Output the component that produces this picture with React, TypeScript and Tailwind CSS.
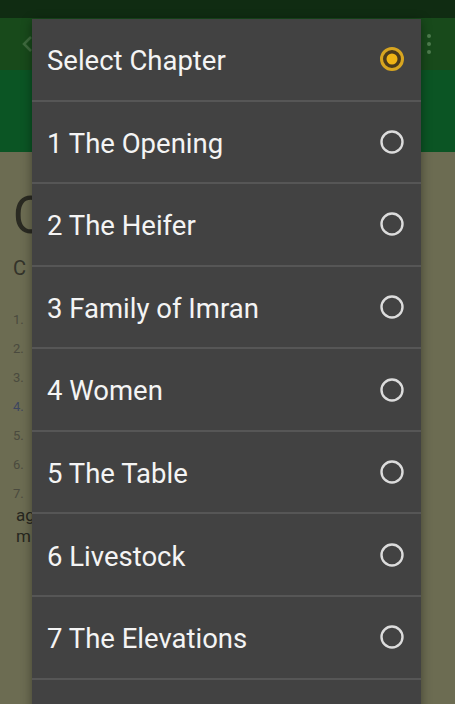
const chapters = [
  "Select Chapter",
  "1 The Opening",
  "2 The Heifer",
  "3 Family of Imran",
  "4 Women",
  "5 The Table",
  "6 Livestock",
  "7 The Elevations"
];

function Radio({ checked }: { checked: boolean }) {
  if (checked) {
    return (
      <svg width="28" height="28" viewBox="0 0 28 28">
        <circle cx="14" cy="14" r="10.5" fill="#4a3a1c" stroke="#d7a520" strokeWidth="3" />
        <circle cx="14" cy="14" r="5.5" fill="#f0b414" />
      </svg>
    );
  }
  return (
    <svg width="28" height="28" viewBox="0 0 28 28">
      <circle cx="14" cy="14" r="10.5" fill="none" stroke="#dcdcdc" strokeWidth="2.4" />
    </svg>
  );
}

export default function App() {
  return (
    <div className="relative h-[704px] w-[455px] overflow-hidden bg-[#6c6c52] font-['Roboto',sans-serif]">
      <div className="h-[18px] bg-[#102c12]" />
      <div className="flex h-[52px] items-center justify-between bg-[#184a1b] pl-[20px] pr-[24px]">
        <svg width="14" height="18" viewBox="0 0 14 18">
          <path d="M11 2 L4 9 L11 16" fill="none" stroke="#3e6a3e" strokeWidth="2.5" />
        </svg>
        <div className="flex flex-col gap-[4px]">
          <span className="h-[4px] w-[4px] rounded-full bg-[#4e7d4e]" />
          <span className="h-[4px] w-[4px] rounded-full bg-[#4e7d4e]" />
          <span className="h-[4px] w-[4px] rounded-full bg-[#4e7d4e]" />
        </div>
      </div>
      <div className="h-[82px] bg-[#0b5524]" />
      <div className="px-[13px] pt-[38px] text-[#2a2a22]">
        <div className="text-[52px] leading-[52px]">Q</div>
        <div className="mt-[14px] text-[20px] leading-[24px] text-[#33332a]">C</div>
        <div className="mt-[31px] flex flex-col gap-[12px] text-[13px] leading-[17px] text-[#4a4a3e]">
          <span>1.</span>
          <span>2.</span>
          <span>3.</span>
          <span className="text-[#3c4660]">4.</span>
          <span>5.</span>
          <span>6.</span>
          <span>7.</span>
        </div>
        <div className="mt-[3px] pl-[3px] text-[17px] leading-[20px] text-[#27271f]">ag</div>
        <div className="pl-[3px] text-[17px] leading-[22px] text-[#27271f]">m</div>
      </div>

      <div className="absolute left-[32px] top-[19px] w-[389px] bg-[#424242] shadow-[0_2px_10px_rgba(0,0,0,0.4)]">
        {chapters.map((name, i) => (
          <div
            key={name}
            className="flex h-[82.57px] items-center justify-between border-b-[2px] border-[#565656] pl-[15px] pr-[15px]"
          >
            <span className="pt-[3px] text-[27.5px] text-[#f4f4f4]">{name}</span>
            <Radio checked={i === 0} />
          </div>
        ))}
        <div className="h-[82px]" />
      </div>
    </div>
  );
}
